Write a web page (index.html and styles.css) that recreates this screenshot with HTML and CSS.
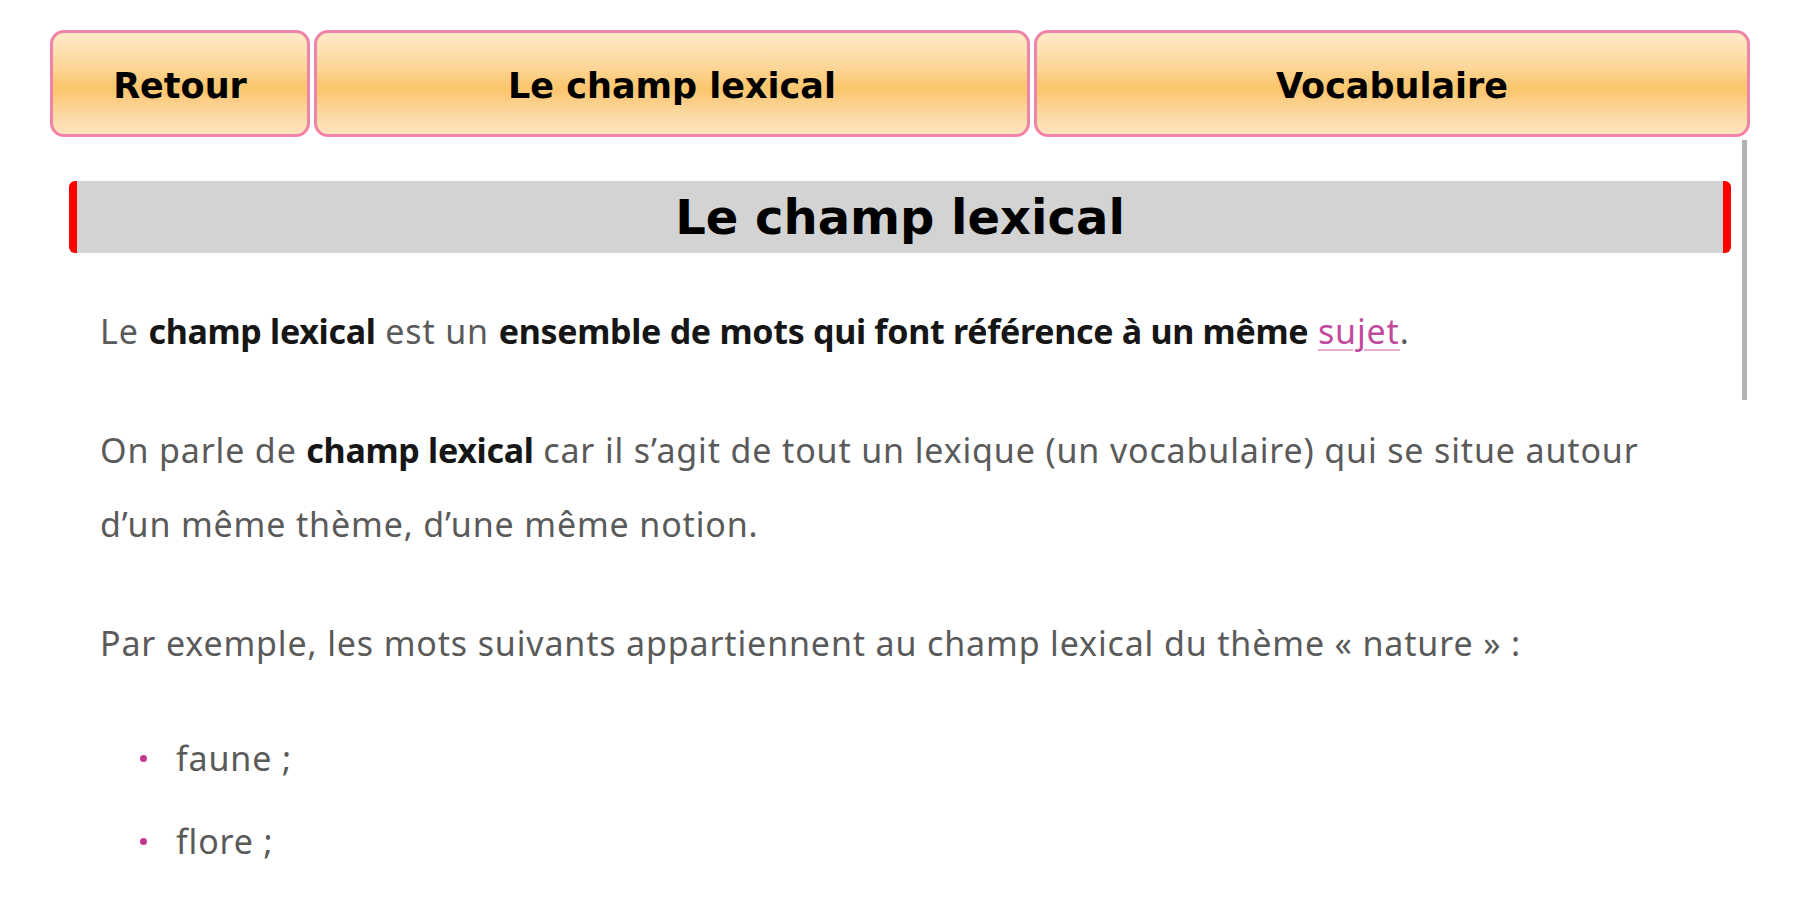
FILE: index.html
```html
<!DOCTYPE html>
<html lang="fr">
<head>
<meta charset="utf-8">
<title>Le champ lexical</title>
<link rel="stylesheet" href="styles.css">
</head>
<body>
<nav class="nav">
  <a class="nav-btn nav-back" href="#">Retour</a>
  <a class="nav-btn" href="#">Le champ lexical</a>
  <a class="nav-btn" href="#">Vocabulaire</a>
</nav>
<main class="content">
  <div class="scrollbar"></div>
  <h1 class="title">Le champ lexical</h1>
  <p class="text">Le <strong>champ lexical</strong> est un <strong>ensemble de mots qui font référence à un même</strong> <a class="link" href="#">sujet</a>.</p>
  <p class="text">On parle de <strong>champ lexical</strong> car il s’agit de tout un lexique (un vocabulaire) qui se situe autour d’un même thème, d’une même notion.</p>
  <p class="text">Par exemple, les mots suivants appartiennent au champ lexical du thème « nature » :</p>
  <ul class="list">
    <li class="item">faune ;</li>
    <li class="item">flore ;</li>
  </ul>
</main>
</body>
</html>
```
FILE: styles.css
```css
html, body {
  margin: 0;
  padding: 0;
  background: #ffffff;
}
body {
  font-family: "Noto Sans", Lato, sans-serif;
  overflow: hidden;
  height: 900px;
}
.nav {
  display: flex;
  gap: 4px;
  padding: 30px 50px 0;
}
.nav-btn {
  flex: 1 1 0;
  box-sizing: border-box;
  height: 107px;
  padding-top: 4px;
  display: flex;
  align-items: center;
  justify-content: center;
  border: 3px solid #ef84a8;
  border-radius: 14px;
  background: linear-gradient(to bottom, #fee9c9 0%, #fdd9a0 30%, #fbc56b 55%, #fdd8a4 80%, #fee4bd 100%);
  color: #000;
  text-decoration: none;
  font-family: "DejaVu Sans", sans-serif;
  font-weight: bold;
  font-size: 35px;
}
.nav-back {
  flex: 0 0 260px;
}
.content {
  position: relative;
  margin: 0 69px;
  padding-top: 44px;
}
.scrollbar {
  position: absolute;
  top: 3px;
  right: -16px;
  width: 5px;
  height: 260px;
  background: #b3b3b3;
}
.title {
  margin: 0;
  height: 72px;
  box-sizing: border-box;
  display: flex;
  align-items: center;
  justify-content: center;
  background: #d3d3d3;
  border-left: 8px solid #ff0000;
  border-right: 8px solid #ff0000;
  border-radius: 6px;
  font-family: "DejaVu Sans", sans-serif;
  font-weight: bold;
  font-size: 48px;
  color: #000;
}
.text {
  margin: 45px 0 0;
  padding: 0 31px;
  font-size: 34px;
  line-height: 74px;
  letter-spacing: 0.85px;
  color: #5a5a5a;
}
.text:first-of-type {
  margin-top: 41px;
}
.text strong {
  color: #161616;
  font-weight: bold;
  letter-spacing: -0.3px;
}
.link {
  color: #c04a9d;
  text-decoration: underline;
  text-decoration-color: #e6a9d3;
  text-decoration-thickness: 2px;
  text-underline-offset: 5px;
}
.list {
  list-style: none;
  margin: 41px 0 0;
  padding: 0 0 0 71px;
}
.item {
  display: flex;
  align-items: center;
  gap: 29px;
  font-size: 34px;
  line-height: 74px;
  letter-spacing: 0.85px;
  margin-bottom: 9px;
  color: #5a5a5a;
}
.item::before {
  content: "";
  width: 7px;
  height: 7px;
  border-radius: 50%;
  background: #c2378f;
}
```
